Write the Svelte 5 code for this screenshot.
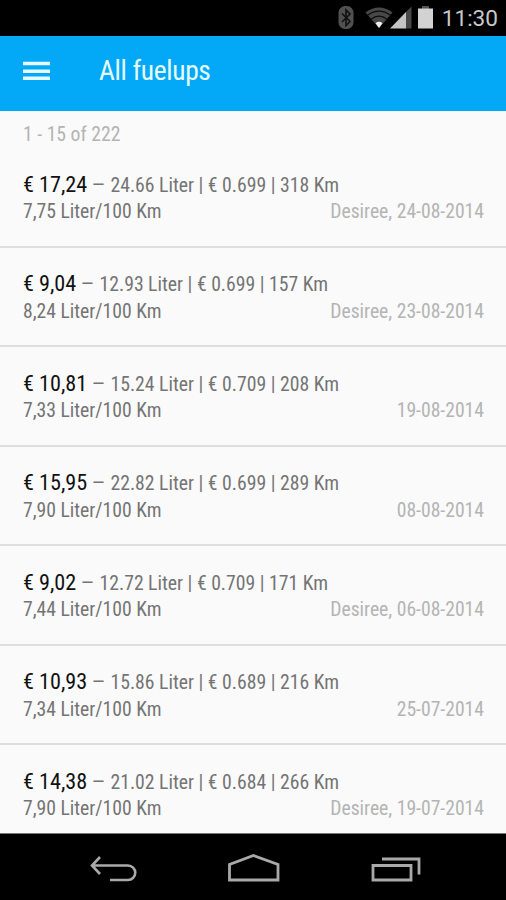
<script lang="ts">
  type Fuelup = {
    price: string;
    details: string;
    usage: string;
    meta: string;
  };

  const fuelups: Fuelup[] = [
    { price: "€ 17,24", details: "24.66 Liter | € 0.699 | 318 Km", usage: "7,75", meta: "Desiree, 24-08-2014" },
    { price: "€ 9,04", details: "12.93 Liter | € 0.699 | 157 Km", usage: "8,24", meta: "Desiree, 23-08-2014" },
    { price: "€ 10,81", details: "15.24 Liter | € 0.709 | 208 Km", usage: "7,33", meta: "19-08-2014" },
    { price: "€ 15,95", details: "22.82 Liter | € 0.699 | 289 Km", usage: "7,90", meta: "08-08-2014" },
    { price: "€ 9,02", details: "12.72 Liter | € 0.709 | 171 Km", usage: "7,44", meta: "Desiree, 06-08-2014" },
    { price: "€ 10,93", details: "15.86 Liter | € 0.689 | 216 Km", usage: "7,34", meta: "25-07-2014" },
    { price: "€ 14,38", details: "21.02 Liter | € 0.684 | 266 Km", usage: "7,90", meta: "Desiree, 19-07-2014" },
  ];
</script>

<div class="phone">
  <div class="status-bar">
    <svg class="status-icons" viewBox="0 0 100 36" aria-hidden="true">
      <!-- bluetooth -->
      <rect x="3.5" y="6" width="15" height="23" rx="6.5" fill="#505050" />
      <path d="M7 13.5l8 8-4 4V10l4 4-8 8" fill="none" stroke="#111" stroke-width="1.6" />
      <!-- wifi -->
      <path d="M30.5 12.5Q44 2.5 57.5 12.5L44 28z" fill="#484848" />
      <path d="M32.5 15.2Q44 7 55.5 15.2M36 19.2Q44 13.2 52 19.2" fill="none" stroke="#0c0c0c" stroke-width="1.3" />
      <path d="M40.5 23.2Q44 20.5 47.5 23.2L44 28z" fill="#eee" />
      <!-- signal -->
      <path d="M55 28.5L71 12v16.5z" fill="#c4c4c4" />
      <path d="M71 12l5.5-5.5v22H71z" fill="#484848" />
      <!-- battery -->
      <path d="M87 6h7v3h-7z" fill="#555" />
      <path d="M83 8.5h15v20H83z" fill="#d2d2d2" />
    </svg>
    <span class="clock">11:30</span>
  </div>

  <header class="toolbar">
    <svg class="menu" viewBox="0 0 28 20" aria-hidden="true">
      <path d="M0 2.5h27M0 10.2h27M0 17.3h27" stroke="#e6fbff" stroke-width="3.6" />
    </svg>
    <h1>All fuelups</h1>
  </header>

  <main>
    <p class="count">1 - 15 of 222</p>
    <ul>
      {#each fuelups as fuelup}
        <li>
          <div class="line">
            <span class="price">{fuelup.price}</span>
            <span class="dash">–</span>
            <span class="details">{fuelup.details}</span>
          </div>
          <div class="line">
            <span>{fuelup.usage} Liter/100 Km</span>
            <span class="meta">{fuelup.meta}</span>
          </div>
        </li>
      {/each}
    </ul>
  </main>

  <nav>
    <svg viewBox="0 0 506 66" fill="none" stroke="#a9a9a9" stroke-width="2.8" aria-hidden="true">
      <path d="M100 23l-8 8.5 8 8.5M92 31.5h36a7 7 0 0 1 0 14.5H110" stroke-width="2.6" />
      <path d="M229.5 46V30.5L253.5 21.5l24.500 9V46z" />
      <path d="M373 31.5h38V46h-38zM382 25h37v15.500" />
    </svg>
  </nav>
</div>

<style>
  :global(body) {
    background: #000;
  }

  .phone {
    display: flex;
    flex-direction: column;
    width: 506px;
    height: 900px;
    overflow: hidden;
    background: #fafafa;
    font-family: "Roboto Condensed", Roboto, sans-serif;
    font-stretch: 75%;
  }

  .status-bar {
    display: flex;
    flex: none;
    justify-content: flex-end;
    align-items: center;
    box-sizing: border-box;
    height: 36px;
    padding-right: 8px;
    background: #000;
  }

  .status-icons {
    width: 100px;
    height: 36px;
    margin-right: 7px;
  }

  .clock {
    height: 36px;
    color: #c8c8c8;
    font-family: Roboto, sans-serif;
    font-stretch: 100%;
    font-size: 22.6px;
    line-height: 38px;
  }

  .toolbar {
    display: flex;
    flex: none;
    align-items: center;
    box-sizing: border-box;
    height: 75px;
    padding: 0 23px 6px;
    background: #03a9f6;
  }

  .menu {
    width: 28px;
    height: 20px;
  }

  h1 {
    margin: 0 0 1px 48px;
    color: #e6fbff;
    font-size: 27.5px;
    font-weight: 400;
    letter-spacing: -0.35px;
  }

  main {
    flex: 1;
    min-height: 0;
    overflow: hidden;
  }

  .count {
    height: 37px;
    margin: 0;
    padding: 0 23px;
    color: #b4b4b4;
    font-size: 19.7px;
    line-height: 47px;
  }

  ul {
    margin: 0;
    padding: 0;
    list-style: none;
  }

  li {
    box-sizing: border-box;
    height: 99.5px;
    padding: 22.5px 22px 0 23px;
    border-bottom: 2px solid #dedede;
    color: #747474;
    font-size: 19.65px;
  }

  .line {
    display: flex;
    align-items: baseline;
    height: 27.5px;
    line-height: 27px;
    white-space: nowrap;
  }

  .price {
    color: #111;
    font-size: 22.2px;
  }

  .dash {
    margin: 0 6px;
    font-stretch: 100%;
    transform: scaleX(1.25);
  }

  .details {
    font-size: 19.7px;
  }

  .meta {
    margin-left: auto;
    color: #b4b4b4;
  }

  nav {
    flex: none;
    height: 66px;
    border-top: 1px solid #777;
    background: #000;
  }

  nav svg {
    display: block;
    width: 506px;
    height: 66px;
  }
</style>
